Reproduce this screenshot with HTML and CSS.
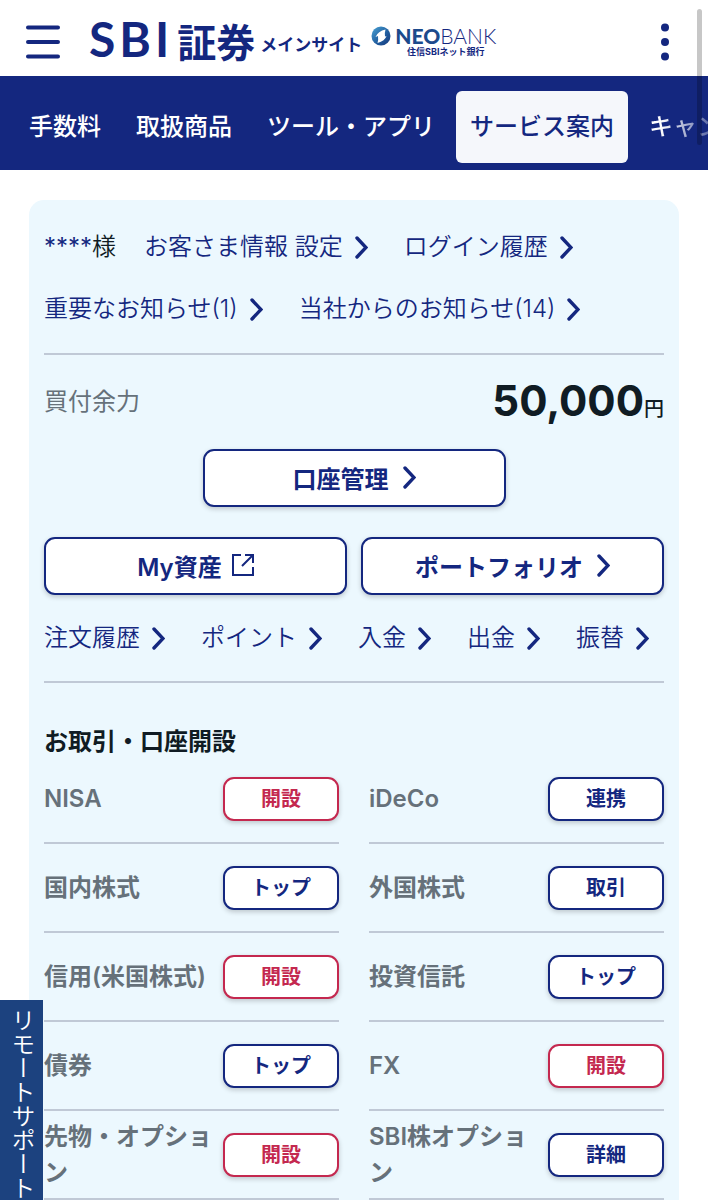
FILE: index.html
```html
<!DOCTYPE html>
<html lang="ja">
<head>
<meta charset="utf-8">
<meta name="viewport" content="width=device-width, initial-scale=1">
<title>SBI証券</title>
<link rel="stylesheet" href="styles.css">
</head>
<body>
<svg class="defs" aria-hidden="true">
<symbol id="chevron" viewBox="0 0 13 23"><path d="M2 2l9 9.500L2 21" fill="none" stroke="currentColor" stroke-width="3.400" stroke-linecap="round"/></symbol>
</svg>
<div class="scroll-thumb"></div>
<header class="header">
<button class="icon-btn" aria-label="メニュー">
<svg width="34" height="34" viewBox="0 0 34 34"><path d="M2 2.500h30M2 17h30M2 31.500h30" stroke="currentColor" stroke-width="4" stroke-linecap="round"/></svg>
</button>
<a class="logo" href="#"><span class="logo-en"><span>S</span><span>B</span><span>I</span></span><span class="logo-ja">証券</span><span class="logo-sub">メインサイト</span></a>
<a class="neobank" href="#">
<svg width="20" height="20" viewBox="0 0 20 20"><defs><linearGradient id="g" x1="0" y1="0" x2="1" y2="1"><stop offset="0" stop-color="#4aa3d4"/><stop offset="0.600" stop-color="#1f5a9c"/><stop offset="1" stop-color="#173a7c"/></linearGradient></defs><circle cx="10" cy="10" r="9.500" fill="url(#g)"/><path d="M14.500 3.500Q13.500 6.500 14 10.500l1.500-.5Q14 15 6.500 17q1-3 .5-7L4.500 11Q7 5 14.500 3.500z" fill="#fff"/></svg>
<span class="neobank-text"><span class="neobank-name"><b>NEO</b>BANK</span><span class="neobank-sub">住信SBIネット銀行</span></span>
</a>
<button class="icon-btn more" aria-label="その他">
<svg width="10" height="38" viewBox="0 0 10 38" fill="currentColor"><circle cx="5" cy="4.500" r="4"/><circle cx="5" cy="19" r="4"/><circle cx="5" cy="33.500" r="4"/></svg>
</button>
</header>
<nav class="nav">
<a href="#">手数料</a>
<a href="#">取扱商品</a>
<a href="#">ツール・アプリ</a>
<a href="#" class="active">サービス案内</a>
<a href="#">キャンペーン</a>
</nav>
<main class="card">
<div class="links">
<span class="user"><b>****</b>様</span>
<a href="#">お客さま情報 設定<svg class="chev"><use href="#chevron"/></svg></a>
<a href="#">ログイン履歴<svg class="chev"><use href="#chevron"/></svg></a>
</div>
<div class="links">
<a href="#">重要なお知らせ(1)<svg class="chev"><use href="#chevron"/></svg></a>
<a href="#">当社からのお知らせ(14)<svg class="chev"><use href="#chevron"/></svg></a>
</div>
<div class="balance">
<span class="balance-label">買付余力</span>
<span class="balance-value">50,000<small>円</small></span>
</div>
<div class="buttons">
<button class="btn wide">口座管理<svg class="chev"><use href="#chevron"/></svg></button>
<button class="btn">My資産<svg class="ext" width="22" height="22" viewBox="0 0 22 22" fill="none" stroke="currentColor" stroke-width="2"><path d="M9 1H1v20h20v-8M13 1h8v8M21 1L10 12"/></svg></button>
<button class="btn">ポートフォリオ<svg class="chev"><use href="#chevron"/></svg></button>
</div>
<div class="links quick">
<a href="#">注文履歴<svg class="chev"><use href="#chevron"/></svg></a>
<a href="#">ポイント<svg class="chev"><use href="#chevron"/></svg></a>
<a href="#">入金<svg class="chev"><use href="#chevron"/></svg></a>
<a href="#">出金<svg class="chev"><use href="#chevron"/></svg></a>
<a href="#">振替<svg class="chev"><use href="#chevron"/></svg></a>
</div>
<h2>お取引・口座開設</h2>
<div class="products">
<div class="product"><span>NISA</span><button class="btn small red">開設</button></div>
<div class="product"><span>iDeCo</span><button class="btn small">連携</button></div>
<div class="product"><span>国内株式</span><button class="btn small">トップ</button></div>
<div class="product"><span>外国株式</span><button class="btn small">取引</button></div>
<div class="product"><span>信用(米国株式)</span><button class="btn small red">開設</button></div>
<div class="product"><span>投資信託</span><button class="btn small">トップ</button></div>
<div class="product"><span>債券</span><button class="btn small">トップ</button></div>
<div class="product"><span>FX</span><button class="btn small red">開設</button></div>
<div class="product"><span>先物・オプション</span><button class="btn small red">開設</button></div>
<div class="product"><span>SBI株オプション</span><button class="btn small">詳細</button></div>
</div>
</main>
<a class="remote" href="#">リモートサポート</a>
</body>
</html>
```
FILE: styles.css
```css
* {
box-sizing: border-box;
}
body {
margin: 0;
background: #fff;
color: #14277f;
font-family: Inter, "Noto Sans CJK JP", sans-serif;
font-size: 24px;
line-height: 36px;
}
a {
color: inherit;
text-decoration: none;
white-space: nowrap;
}
button {
font-family: inherit;
color: inherit;
cursor: pointer;
}
.defs {
position: absolute;
width: 0;
height: 0;
}
.scroll-thumb {
position: absolute;
top: 9px;
right: 6px;
width: 5px;
height: 136px;
border-radius: 3px;
background: rgba(0, 0, 0, 0.22);
z-index: 2;
}

/* header */
.header {
display: flex;
align-items: center;
height: 76px;
padding: 8px 38px 0 26px;
}
.icon-btn {
display: flex;
padding: 0;
border: 0;
background: none;
}
.logo {
display: flex;
align-items: baseline;
margin-left: 29px;
margin-bottom: 6px;
font-weight: 700;
}
.logo-en {
display: flex;
gap: 4px;
font-family: Lato, sans-serif;
font-size: 48px;
line-height: 60px;
}
.logo-ja {
margin-left: 8px;
font-size: 39px;
}
.logo-sub {
align-self: flex-end;
margin: 0 0 6px 5px;
font-size: 17px;
}
.neobank {
display: flex;
align-items: flex-start;
gap: 4px;
margin-left: 9px;
}
.neobank-text {
display: flex;
flex-direction: column;
align-items: center;
}
.neobank-name {
font-family: Lato, sans-serif;
font-size: 21px;
line-height: 20px;
font-weight: 300;
}
.neobank-name b {
font-weight: 900;
color: #1c4a8c;
}
.neobank-sub {
font-size: 9px;
line-height: 12px;
font-weight: 700;
}
.more {
margin-left: auto;
}

/* global nav */
.nav {
display: flex;
gap: 7px;
height: 94px;
padding: 15px 0 7px 15px;
overflow: hidden;
background: #14277f;
color: #fff;
font-weight: 500;
}
.nav a {
flex: none;
padding: 0 14px;
line-height: 72px;
border-radius: 6px;
}
.nav a.active {
background: #f5f7fb;
color: #14277f;
}
.nav a:last-child {
background: linear-gradient(90deg, #fff 25px, #5967a5 75px);
background-clip: text;
color: transparent;
}

/* account card */
.card {
margin: 30px 29px 0;
padding: 29px 15px 0;
border-radius: 15px 15px 0 0;
background: #ecf8fe;
}
.links {
display: flex;
align-items: flex-start;
gap: 36px;
height: 62px;
font-weight: 350;
}
.links a {
display: flex;
align-items: center;
gap: 12px;
}
.user {
margin-right: -8px;
color: #101c24;
}
.user b {
font-weight: 400;
color: #14277f;
}
.chev {
flex: none;
width: 13px;
height: 23px;
}
.balance {
display: flex;
align-items: center;
justify-content: space-between;
height: 96px;
border-top: 2px solid #c0c9d6;
}
.balance-label {
color: #66717a;
}
.balance-value {
padding-top: 6px;
color: #101c24;
font-size: 42px;
font-weight: 700;
}
.balance-value small {
font-size: 20px;
font-weight: 500;
}
.buttons {
display: grid;
grid-template-columns: 1fr 1fr;
gap: 30px 14px;
}
.btn {
display: flex;
align-items: center;
justify-content: center;
gap: 14px;
height: 58px;
padding: 0 0 2px;
border: 2px solid currentColor;
border-radius: 11px;
background: #fff;
box-shadow: 0 2px 5px rgba(0, 0, 0, 0.2);
font-size: 24px;
font-weight: 600;
}
.btn .ext {
margin-left: -4px;
}
.wide {
grid-column: 1 / 3;
justify-self: center;
width: calc(50% - 7px);
}
.quick {
height: 88px;
padding: 25px 0;
border-bottom: 2px solid #c0c9d6;
}
h2 {
margin: 41px 0 0;
color: #101c24;
font-size: 24px;
line-height: 36px;
font-weight: 700;
}

/* product list */
.products {
display: grid;
grid-template-columns: 1fr 1fr;
column-gap: 30px;
margin-top: -5px;
}
.product {
display: flex;
align-items: center;
justify-content: space-between;
gap: 8px;
height: 89px;
border-bottom: 2px solid #c0c9d6;
color: #66717a;
font-weight: 600;
}
.btn.small {
flex: none;
width: 116px;
height: 44px;
color: #14277f;
font-size: 20px;
}
.btn.red {
color: #c4284f;
}

/* fixed support tab */
.remote {
position: fixed;
left: 0;
bottom: 0;
width: 43px;
height: 200px;
padding-top: 8px;
background: #1c427f;
color: #fff;
line-height: 43px;
writing-mode: vertical-rl;
font-weight: 350;
}
```
